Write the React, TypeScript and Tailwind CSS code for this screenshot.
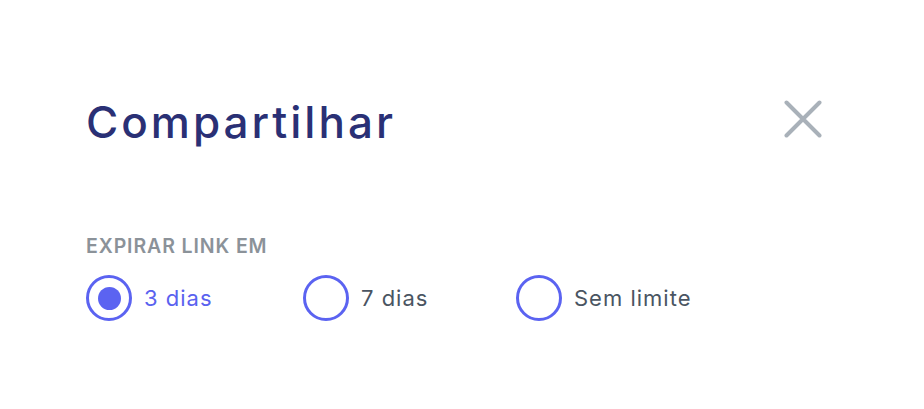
import { useState } from 'react'

const options = [
  { id: '3', label: '3 dias', width: 'w-[217px]' },
  { id: '7', label: '7 dias', width: 'w-[213px]' },
  { id: 'none', label: 'Sem limite', width: '' },
]

export default function App() {
  const [expiry, setExpiry] = useState('3')

  return (
    <div className="w-[924px] h-[409px] bg-white font-['Inter','Open_Sans',sans-serif]">
      <div className="pl-[86px] pr-[102px] pt-[92px]">
        {/* Header */}
        <div className="flex items-center justify-between">
          <h1 className="text-[44px] leading-[60px] font-medium text-[#2a3075] tracking-[3px]">
            Compartilhar
          </h1>
          <button aria-label="Fechar" className="text-[#a9b1b9] -mt-[6px]">
            <svg width="38" height="38" viewBox="0 0 38 38" fill="none" stroke="currentColor" strokeWidth="4" strokeLinecap="round">
              <path d="M2.5 2.5L35.5 35.5M35.5 2.5L2.5 35.5" />
            </svg>
          </button>
        </div>

        {/* Expiry */}
        <div className="mt-[82px]">
          <p className="text-[19.5px] leading-[24px] font-semibold text-[#8b9299] uppercase tracking-[0.9px]">Expirar link em</p>
          <div className="flex items-center mt-[17px]">
            {options.map((o) => {
              const active = expiry === o.id
              return (
                <label key={o.id} className={`flex items-center gap-[12px] cursor-pointer ${o.width}`} onClick={() => setExpiry(o.id)}>
                  <span className="w-[46px] h-[46px] rounded-full border-[3px] border-[#5b63f1] flex items-center justify-center">
                    {active && <span className="w-[23px] h-[23px] rounded-full bg-[#5b63f1]" />}
                  </span>
                  <span className={`text-[22px] tracking-[1px] ${active ? 'text-[#5a62ef]' : 'text-[#4a5562]'}`}>{o.label}</span>
                </label>
              )
            })}
          </div>
        </div>
      </div>
    </div>
  )
}
